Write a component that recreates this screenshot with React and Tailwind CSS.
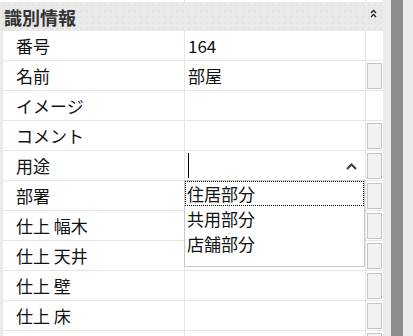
const rows = [
  { label: "番号", value: "164", box: false },
  { label: "名前", value: "部屋", box: true },
  { label: "イメージ", value: "", box: false },
  { label: "コメント", value: "", box: true },
  { label: "用途", value: "", box: true, edit: true },
  { label: "部署", value: "", box: true },
  { label: "仕上 幅木", value: "", box: true },
  { label: "仕上 天井", value: "", box: true },
  { label: "仕上 壁", value: "", box: true },
  { label: "仕上 床", value: "", box: true },
  { label: "", value: "", box: true },
];

const options = ["住居部分", "共用部分", "店舗部分"];

const font = "font-['Noto_Sans_CJK_JP','Noto_Sans',sans-serif]";

const Row = ({ row }) => {
  return (
    <div className="flex h-[30px] shrink-0 border-b border-[#e6e6e6] bg-white">
      <div className="flex w-[182px] items-center border-r border-[#e6e6e6] pl-[13px] text-[17px] leading-none text-[#111]">
        {row.label}
      </div>
      <div className="relative flex w-[181px] items-center border-r border-[#e6e6e6] pl-[3px] text-[17px] leading-none text-[#111]">
        {row.value}
        {row.edit && (
          <>
            <div className="h-[25px] w-px bg-black" />
            <svg className="absolute right-[8px] top-[12px]" width="11" height="7" viewBox="0 0 11 7">
              <path d="M1 6 L5.5 1.5 L10 6" fill="none" stroke="#3a3a3a" strokeWidth="2" />
            </svg>
            <div className="absolute left-[-1px] top-[29px] z-10 h-[87px] w-[181px] border border-[#c8c8c8] bg-white">
              {options.map((opt, i) => (
                <div
                  key={opt}
                  className={
                    "flex h-[25px] items-center pl-[1px] text-[17px] leading-none text-[#111] " +
                    (i === 0 ? "border border-dotted border-black" : "border border-transparent")
                  }
                >
                  {opt}
                </div>
              ))}
            </div>
          </>
        )}
      </div>
      <div className="flex w-[17px] items-center justify-center">
        {row.box && <div className="h-[26px] w-[15px] border border-[#c4c4c4] bg-[#f2f2f2]" />}
      </div>
    </div>
  );
};

export default function App() {
  return (
    <div className={`flex h-[336px] w-[413px] overflow-hidden bg-[#ebebeb] ${font}`}>
      <div className="flex w-[383px] shrink-0 flex-col">
        <div className="flex h-[2px] shrink-0 bg-white pl-[3px]">
          <div className="w-[182px] border-r border-[#e6e6e6]" />
          <div className="w-[181px] border-r border-[#e6e6e6]" />
        </div>
        <div className="flex h-[29px] shrink-0 items-center justify-between bg-[#e9e9e9] bg-[radial-gradient(circle,#dadada_0.6px,transparent_0.8px)] bg-[length:6px_6px] pl-[4px] pr-[6px]">
          <span className="text-[18px] font-bold leading-none text-[#333]">識別情報</span>
          <svg className="mb-[6px]" width="7" height="9" viewBox="0 0 7 9">
            <path d="M1 4 L3.5 1.5 L6 4" fill="none" stroke="#222" strokeWidth="1.3" />
            <path d="M1 8 L3.5 5.5 L6 8" fill="none" stroke="#222" strokeWidth="1.3" />
          </svg>
        </div>
        <div className="flex shrink-0 flex-col pl-[3px]">
          {rows.map((row, i) => (
            <Row key={i} row={row} />
          ))}
        </div>
      </div>
      <div className="w-[8px] shrink-0" />
      <div className="w-[12px] shrink-0 bg-[#8c8c8c]" />
    </div>
  );
}
